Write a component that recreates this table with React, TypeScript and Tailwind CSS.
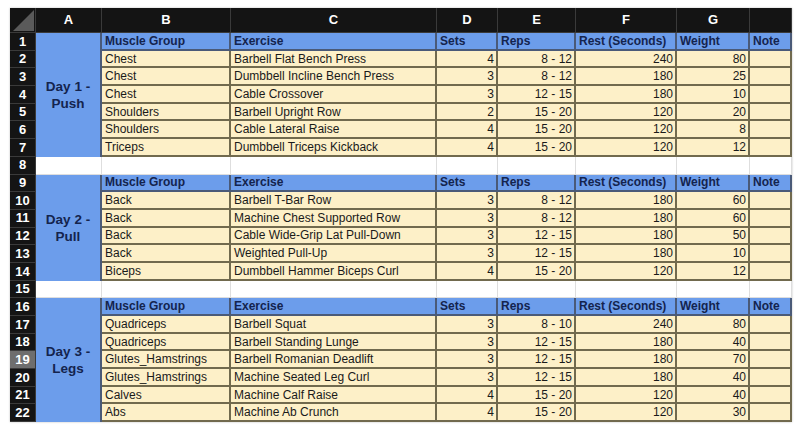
import React from 'react';

type Row =
  | { kind: 'head' }
  | { kind: 'blank' }
  | { kind: 'data'; group: string; exercise: string; sets: number; reps: string; rest: number; weight: number };

const d = (group: string, exercise: string, sets: number, reps: string, rest: number, weight: number): Row => ({
  kind: 'data', group, exercise, sets, reps, rest, weight,
});

const days = [
  {
    label: ['Day 1 -', 'Push'],
    span: 'row-span-7',
    rows: [
      d('Chest', 'Barbell Flat Bench Press', 4, '8 - 12', 240, 80),
      d('Chest', 'Dumbbell Incline Bench Press', 3, '8 - 12', 180, 25),
      d('Chest', 'Cable Crossover', 3, '12 - 15', 180, 10),
      d('Shoulders', 'Barbell Upright Row', 2, '15 - 20', 120, 20),
      d('Shoulders', 'Cable Lateral Raise', 4, '15 - 20', 120, 8),
      d('Triceps', 'Dumbbell Triceps Kickback', 4, '15 - 20', 120, 12),
    ],
  },
  {
    label: ['Day 2 -', 'Pull'],
    span: 'row-span-6',
    rows: [
      d('Back', 'Barbell T-Bar Row', 3, '8 - 12', 180, 60),
      d('Back', 'Machine Chest Supported Row', 3, '8 - 12', 180, 60),
      d('Back', 'Cable Wide-Grip Lat Pull-Down', 3, '12 - 15', 180, 50),
      d('Back', 'Weighted Pull-Up', 3, '12 - 15', 180, 10),
      d('Biceps', 'Dumbbell Hammer Biceps Curl', 4, '15 - 20', 120, 12),
    ],
  },
  {
    label: ['Day 3 -', 'Legs'],
    span: 'row-span-7',
    rows: [
      d('Quadriceps', 'Barbell Squat', 3, '8 - 10', 240, 80),
      d('Quadriceps', 'Barbell Standing Lunge', 3, '12 - 15', 180, 40),
      d('Glutes_Hamstrings', 'Barbell Romanian Deadlift', 3, '12 - 15', 180, 70),
      d('Glutes_Hamstrings', 'Machine Seated Leg Curl', 3, '12 - 15', 180, 40),
      d('Calves', 'Machine Calf Raise', 4, '15 - 20', 120, 40),
      d('Abs', 'Machine Ab Crunch', 4, '15 - 20', 120, 30),
    ],
  },
];

const letters = ['A', 'B', 'C', 'D', 'E', 'F', 'G', ''];
const heads = ['Muscle Group', 'Exercise', 'Sets', 'Reps', 'Rest (Seconds)', 'Weight', 'Note'];

function RowNum({ n }: { n: number }) {
  return (
    <div
      className={`col-start-1 flex items-center justify-center border-b border-r border-[#3a3a3a] text-[13px] font-bold text-white ${
        n === 19 ? 'bg-[#6e6e6e]' : 'bg-[#141414]'
      }`}
    >
      {n}
    </div>
  );
}

const yellow = 'bg-[#fdf0c8] border-r-2 border-b-2 border-[#716a4e] text-[12px] text-[#1a1a1a] flex items-center whitespace-nowrap overflow-hidden';
const blue = 'bg-[#6c9deb] border-r-2 border-b-2 border-[#4a5a78] text-[12px] font-bold text-[#14244e] flex items-center px-[3px] whitespace-nowrap overflow-hidden';
const white = 'bg-white border-r border-b border-[#dedede]';

export default function App() {
  let n = 0;
  const cells: React.ReactNode[] = [];

  days.forEach((day, di) => {
    // header row of the block
    n++;
    cells.push(<RowNum key={`n${n}`} n={n} />);
    cells.push(
      <div
        key={`day${di}`}
        className={`${day.span} flex flex-col items-center justify-center bg-[#6c9deb] border-r-2 border-[#4a5a78] text-[13.5px] font-bold leading-[17px] text-[#14244e]`}
      >
        <span>{day.label[0]}</span>
        <span>{day.label[1]}</span>
      </div>
    );
    heads.forEach((h, i) => cells.push(<div key={`h${n}-${i}`} className={blue}>{h}</div>));

    day.rows.forEach((r) => {
      if (r.kind !== 'data') return;
      n++;
      cells.push(<RowNum key={`n${n}`} n={n} />);
      cells.push(<div key={`b${n}`} className={`col-start-3 px-[3px] ${yellow}`}>{r.group}</div>);
      cells.push(<div key={`c${n}`} className={`px-[3px] ${yellow}`}>{r.exercise}</div>);
      cells.push(<div key={`d${n}`} className={`justify-end pr-[2px] ${yellow}`}>{r.sets}</div>);
      cells.push(<div key={`e${n}`} className={`justify-end pr-[2px] ${yellow}`}>{r.reps}</div>);
      cells.push(<div key={`f${n}`} className={`justify-end pr-[2px] ${yellow}`}>{r.rest}</div>);
      cells.push(<div key={`g${n}`} className={`justify-end pr-[2px] ${yellow}`}>{r.weight}</div>);
      cells.push(<div key={`i${n}`} className={yellow}></div>);
    });

    if (di < days.length - 1) {
      n++;
      cells.push(<RowNum key={`n${n}`} n={n} />);
      for (let i = 0; i < 8; i++) cells.push(<div key={`w${n}-${i}`} className={white}></div>);
    }
  });

  return (
    <div className="w-[800px] h-[432px] bg-white pl-[10px] pt-[8px] font-['Liberation_Sans',Arial,sans-serif]">
      <div className="grid w-[782px] grid-cols-[26px_66px_129px_206px_61px_78px_101px_73px_42px] grid-rows-[25px_repeat(22,17.7px)] shadow-[0_0_2px_rgba(0,0,0,0.25)]">
        {/* corner cell */}
        <div className="relative overflow-hidden border-r border-b border-[#3a3a3a] bg-[#141414]">
          <svg className="absolute inset-0" width="26" height="25" viewBox="0 0 26 25">
            <polygon points="24,2 24,23 3,23" fill="#5a5a5a" />
          </svg>
        </div>
        {letters.map((l, i) => (
          <div
            key={`L${i}`}
            className="flex items-center justify-center border-r border-b border-[#3a3a3a] bg-[#141414] text-[13px] font-bold text-white"
          >
            {l}
          </div>
        ))}
        {cells}
      </div>
    </div>
  );
}
